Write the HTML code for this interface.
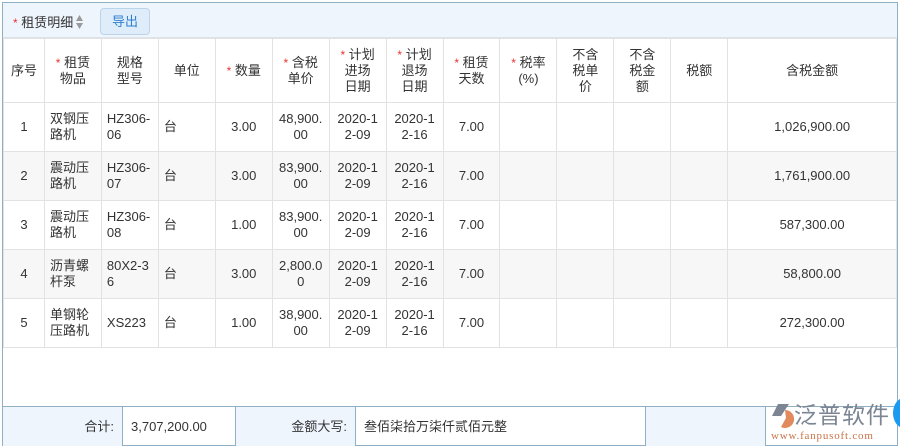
<!DOCTYPE html><html><head><meta charset="utf-8"><style>
*{margin:0;padding:0;box-sizing:border-box}
body{width:900px;height:448px;background:#fff;font-family:"Liberation Sans","Noto Sans CJK SC",sans-serif;font-size:13px;color:#333;position:relative;overflow:hidden}
.frame{position:absolute;left:2px;top:2px;width:896px;height:444px;border:1px solid #8fb0c4;background:#fff}
.bar{position:absolute;left:0;top:0;width:894px;height:35px;background:#eef5fd;border-bottom:1px solid #dde3ea}
.st{color:#e33;font-size:12px}
.btn{position:absolute;left:97px;top:5px;width:50px;height:27px;border:1px solid #bcd4ea;background:#dfedfa;border-radius:4px;color:#2e7fcf;text-align:center;line-height:25px}
table{position:absolute;left:0;top:35px;border-collapse:collapse;table-layout:fixed}
td{border:1px solid #e2e2e2;line-height:16px;text-align:center;vertical-align:middle;padding:0 5px;word-break:break-all}
tr.h td{height:64px}
tr.r td{height:49px}
tr.r:nth-child(odd) td{background:#f7f7f7}
td.l{text-align:left}
.foot{position:absolute;left:0;top:403px;width:894px;height:40px;border-top:1px solid #8fb0c4;display:flex}
.foot div{height:39px;line-height:39px;border-right:1px solid #8fb0c4;padding:0 8px}
.lb{background:#eef5fd;text-align:right}
</style></head><body>
<div class="frame">
<div class="bar"><div style="position:absolute;left:10px;top:9px;font-size:13px"><span class="st">*</span> 租赁明细<svg width="9" height="16" viewBox="0 0 9 16" style="vertical-align:-3px;margin-left:2px"><path d="M4.5 1L8 7H1z M4.5 15L8 9H1z" fill="#9a9a9a"/></svg></div><div class="btn">导出</div></div>
<table>
<colgroup><col style="width:41px"><col style="width:57px"><col style="width:57px"><col style="width:57px"><col style="width:57px"><col style="width:57px"><col style="width:57px"><col style="width:57px"><col style="width:57px"><col style="width:57px"><col style="width:57px"><col style="width:57px"><col style="width:57px"><col style="width:169px"></colgroup>
<tr class="h"><td>序号</td><td><span class="st">*</span> 租赁<br>物品</td><td>规格<br>型号</td><td>单位</td><td><span class="st">*</span> 数量</td><td><span class="st">*</span> 含税<br>单价</td><td><span class="st">*</span> 计划<br>进场<br>日期</td><td><span class="st">*</span> 计划<br>退场<br>日期</td><td><span class="st">*</span> 租赁<br>天数</td><td><span class="st">*</span> 税率<br>(%)</td><td>不含<br>税单<br>价</td><td>不含<br>税金<br>额</td><td>税额</td><td>含税金额</td></tr>
<tr class="r"><td>1</td><td class="l">双钢压路机</td><td class="l">HZ306-06</td><td class="l">台</td><td>3.00</td><td>48,900.<br>00</td><td>2020-1<br>2-09</td><td>2020-1<br>2-16</td><td>7.00</td><td></td><td></td><td></td><td></td><td>1,026,900.00</td></tr>
<tr class="r"><td>2</td><td class="l">震动压路机</td><td class="l">HZ306-07</td><td class="l">台</td><td>3.00</td><td>83,900.<br>00</td><td>2020-1<br>2-09</td><td>2020-1<br>2-16</td><td>7.00</td><td></td><td></td><td></td><td></td><td>1,761,900.00</td></tr>
<tr class="r"><td>3</td><td class="l">震动压路机</td><td class="l">HZ306-08</td><td class="l">台</td><td>1.00</td><td>83,900.<br>00</td><td>2020-1<br>2-09</td><td>2020-1<br>2-16</td><td>7.00</td><td></td><td></td><td></td><td></td><td>587,300.00</td></tr>
<tr class="r"><td>4</td><td class="l">沥青螺杆泵</td><td class="l">80X2-3<br>6</td><td class="l">台</td><td>3.00</td><td>2,800.0<br>0</td><td>2020-1<br>2-09</td><td>2020-1<br>2-16</td><td>7.00</td><td></td><td></td><td></td><td></td><td>58,800.00</td></tr>
<tr class="r"><td>5</td><td class="l">单钢轮压路机</td><td class="l">XS223</td><td class="l">台</td><td>1.00</td><td>38,900.<br>00</td><td>2020-1<br>2-09</td><td>2020-1<br>2-16</td><td>7.00</td><td></td><td></td><td></td><td></td><td>272,300.00</td></tr>
</table>
<div class="foot">
<div class="lb" style="width:120px">合计:</div>
<div style="width:113px">3,707,200.00</div>
<div class="lb" style="width:120px">金额大写:</div>
<div style="width:290px">叁佰柒拾万柒仟贰佰元整</div>
<div class="lb" style="width:120px"></div>
<div style="flex:1;border:none;position:relative;padding:0;overflow:visible">
<svg style="position:absolute;left:4px;top:-4px" width="26" height="26" viewBox="0 0 26 26"><path d="M8 1h11l-8 12H2z" fill="#7b8593"/><path d="M15 7a9 9 0 1 1-4 17l5-9z" fill="#e08a5e"/></svg>
<span style="position:absolute;left:28px;top:-7px;font-size:23px;line-height:30px;color:#7b8593;letter-spacing:1px">泛普软件</span>
<span style="position:absolute;left:5px;top:22px;line-height:14px;font-size:11px;color:#c9734a;font-family:'Liberation Serif',serif;letter-spacing:.8px">www.fanpusoft.com</span>
</div>
</div>
</div>
<div style="position:absolute;left:893px;top:398px;width:22px;height:30px;border-radius:50%;background:#1a9af0"></div>
</body></html>
